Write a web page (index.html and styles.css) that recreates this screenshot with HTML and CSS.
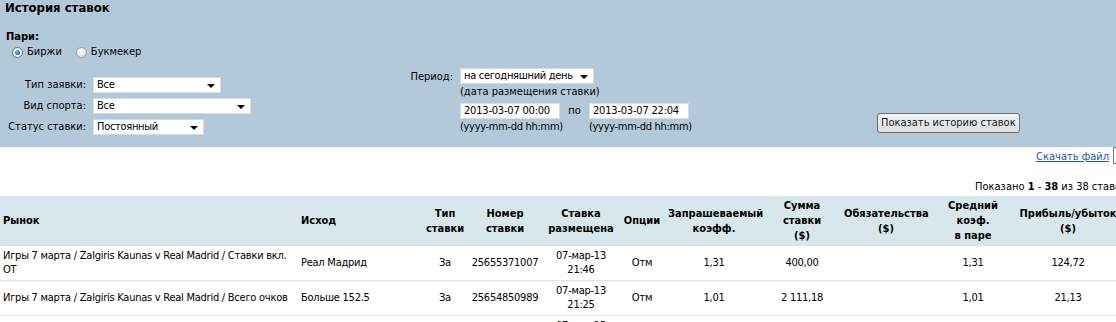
FILE: index.html
```html
<!DOCTYPE html>
<html lang="ru">
<head>
<meta charset="utf-8">
<title>История ставок</title>
<link rel="stylesheet" href="styles.css">
</head>
<body>
<div class="page">
  <div class="panel">
    <h1 class="title">История ставок</h1>
    <div class="pari">
      <div class="pari-label">Пари:</div>
      <div class="radios">
        <span class="radio"><span class="rb rb-on"><span class="dot"></span></span>Биржи</span>
        <span class="radio"><span class="rb"></span>Букмекер</span>
      </div>
    </div>
    <div class="filters">
      <div class="left">
        <span class="lbl">Тип заявки:</span>
        <span class="sel w128"><span class="val">Все</span><span class="arrow"></span></span>
        <span class="lbl">Вид спорта:</span>
        <span class="sel w158"><span class="val">Все</span><span class="arrow"></span></span>
        <span class="lbl">Статус ставки:</span>
        <span class="sel w111"><span class="val">Постоянный</span><span class="arrow"></span></span>
      </div>
      <div class="period">
        <span class="lbl plbl">Период:</span>
        <div class="pmain">
          <span class="sel w134"><span class="val">на сегодняшний день</span><span class="arrow"></span></span>
          <div class="note">(дата размещения ставки)</div>
          <div class="dates">
            <span class="inp">2013-03-07 00:00</span>
            <span class="po">по</span>
            <span class="inp">2013-03-07 22:04</span>
            <span class="hint">(yyyy-mm-dd hh:mm)</span>
            <span></span>
            <span class="hint">(yyyy-mm-dd hh:mm)</span>
          </div>
        </div>
      </div>
      <div class="btnwrap"><span class="btn">Показать историю ставок</span></div>
    </div>
  </div>
  <div class="tools">
    <a class="dl" href="#">Скачать файл</a>
    <span class="fmt"></span>
  </div>
  <div class="shown">Показано <b>1</b> - <b>38</b> из 38 ставок</div>
  <table class="bets">
    <colgroup>
      <col class="c1"><col class="c2"><col class="c3"><col class="c4"><col class="c5"><col class="c6"><col class="c7"><col class="c8"><col class="c9"><col class="c10"><col class="c11">
    </colgroup>
    <thead>
      <tr>
        <th class="l">Рынок</th>
        <th class="l">Исход</th>
        <th>Тип<br>ставки</th>
        <th>Номер<br>ставки</th>
        <th>Ставка<br>размещена</th>
        <th>Опции</th>
        <th>Запрашеваемый<br>коэфф.</th>
        <th>Сумма<br>ставки<br>($)</th>
        <th>Обязательства<br>($)</th>
        <th>Средний<br>коэф.<br>в паре</th>
        <th>Прибыль/убыток<br>($)</th>
      </tr>
    </thead>
    <tbody>
      <tr>
        <td class="l">Игры 7 марта / Zalgiris Kaunas v Real Madrid / Ставки вкл. ОТ</td>
        <td class="l">Реал Мадрид</td>
        <td>За</td>
        <td>25655371007</td>
        <td>07-мар-13<br>21:46</td>
        <td>Отм</td>
        <td>1,31</td>
        <td>400,00</td>
        <td></td>
        <td>1,31</td>
        <td>124,72</td>
      </tr>
      <tr>
        <td class="l">Игры 7 марта / Zalgiris Kaunas v Real Madrid / Всего очков</td>
        <td class="l">Больше 152.5</td>
        <td>За</td>
        <td>25654850989</td>
        <td>07-мар-13<br>21:25</td>
        <td>Отм</td>
        <td>1,01</td>
        <td>2 111,18</td>
        <td></td>
        <td>1,01</td>
        <td>21,13</td>
      </tr>
      <tr>
        <td class="l">Игры 7 марта / Zalgiris Kaunas v Real Madrid</td>
        <td class="l">Реал Мадрид</td>
        <td>За</td>
        <td>25654723461</td>
        <td>07-мар-13<br>21:19</td>
        <td>Отм</td>
        <td>1,20</td>
        <td>500,00</td>
        <td></td>
        <td>1,20</td>
        <td>100,00</td>
      </tr>
    </tbody>
  </table>
</div>
</body>
</html>
```

FILE: styles.css
```css
html, body {
  margin: 0;
  padding: 0;
  overflow: hidden;
  background: #ffffff;
}
body {
  font-family: "DejaVu Sans Condensed", "DejaVu Sans", sans-serif;
  font-stretch: condensed;
  font-size: 11px;
  line-height: 14px;
  color: #000000;
}
.page {
  width: 1127px;
}
.panel {
  background: #b3c9d9;
  height: 147px;
  box-sizing: border-box;
}
.title {
  margin: 0;
  padding: 0 0 0 5px;
  font-size: 13px;
  line-height: 16px;
  font-weight: bold;
}
.pari {
  margin-top: 14px;
  padding-left: 6px;
}
.pari-label {
  font-weight: bold;
}
.radios {
  display: flex;
  gap: 14px;
  margin-top: 1px;
  padding-left: 6px;
}
.radio {
  display: flex;
  align-items: center;
  gap: 4px;
}
.rb {
  width: 11px;
  height: 11px;
  box-sizing: border-box;
  border-radius: 50%;
  border: 1px solid #9aa3aa;
  background: radial-gradient(circle at 35% 35%, #ffffff 0%, #e4e4e4 60%, #cfcfcf 100%);
  display: flex;
  align-items: center;
  justify-content: center;
}
.rb-on {
  border-color: #5c7a92;
  background: radial-gradient(circle at 35% 35%, #ffffff 0%, #dfe6ec 100%);
}
.dot {
  width: 5px;
  height: 5px;
  border-radius: 50%;
  background: radial-gradient(circle at 40% 35%, #7cc3f2 0%, #1b6fb5 70%, #0f4e86 100%);
}
.filters {
  display: grid;
  grid-template-columns: 411px 466px auto;
  margin-top: 8px;
}
.left {
  display: grid;
  grid-template-columns: 86px auto;
  column-gap: 7px;
  row-gap: 5px;
  margin-top: 10px;
  align-items: center;
  justify-items: start;
  align-self: start;
}
.lbl {
  justify-self: end;
  text-align: right;
  white-space: nowrap;
}
.sel {
  display: flex;
  align-items: center;
  justify-content: space-between;
  height: 16px;
  box-sizing: border-box;
  background: #ffffff;
  border: 1px solid #d3dde4;
  padding: 0 5px 0 3px;
  white-space: nowrap;
}
.sel .val {
  letter-spacing: -0.3px;
}
.w128 { width: 128px; }
.w158 { width: 158px; }
.w111 { width: 111px; }
.w134 { width: 134px; }
.arrow {
  flex: none;
  width: 0;
  height: 0;
  border-left: 4px solid transparent;
  border-right: 4px solid transparent;
  border-top: 4px solid #000000;
  margin-top: 1px;
}
.period {
  display: grid;
  grid-template-columns: 42px auto;
  column-gap: 7px;
  align-self: start;
  margin-top: 1px;
}
.plbl {
  line-height: 16px;
  margin-top: 1px;
}
.pmain {
  display: flex;
  flex-direction: column;
  align-items: flex-start;
}
.note {
  margin-top: 1px;
  white-space: nowrap;
}
.dates {
  display: grid;
  grid-template-columns: 100px 29px 100px;
  margin-top: 4px;
  row-gap: 1px;
  align-items: center;
}
.inp {
  height: 16px;
  box-sizing: border-box;
  background: #ffffff;
  border: 1px solid #d3dde4;
  padding: 0 3px;
  line-height: 14px;
  white-space: nowrap;
  letter-spacing: -0.2px;
}
.po {
  text-align: center;
}
.hint {
  white-space: nowrap;
  letter-spacing: -0.3px;
}
.btnwrap {
  align-self: start;
  margin-top: 46px;
}
.btn {
  display: inline-block;
  height: 20px;
  box-sizing: border-box;
  line-height: 18px;
  padding: 0 3px;
  border: 1px solid #707070;
  border-radius: 3px;
  background: linear-gradient(#f4f4f4, #dedede);
  color: #101828;
  white-space: nowrap;
}
.tools {
  display: flex;
  justify-content: flex-end;
  align-items: flex-start;
  gap: 4px;
  height: 17px;
}
.dl {
  margin-top: 3px;
  color: #1b56a6;
  text-decoration: underline;
}
.fmt {
  width: 14px;
  height: 17px;
  box-sizing: border-box;
  border: 1px solid #7a7a7a;
  border-right: none;
  background: #ffffff;
}
.shown {
  margin-top: 16px;
  text-align: right;
}
.bets {
  margin-top: 2px;
  width: 1121px;
  table-layout: fixed;
  border-collapse: collapse;
}
.c1 { width: 298px; }
.c2 { width: 125px; }
.c3 { width: 44px; }
.c4 { width: 76px; }
.c5 { width: 76px; }
.c6 { width: 46px; }
.c7 { width: 98px; }
.c8 { width: 78px; }
.c9 { width: 90px; }
.c10 { width: 84px; }
.c11 { width: 106px; }
.bets th {
  background: #d8e7eb;
  font-weight: bold;
  line-height: 15px;
  padding: 2px 3px 3px;
  text-align: center;
  vertical-align: middle;
  white-space: nowrap;
}
.bets td {
  padding: 3px;
  text-align: center;
  vertical-align: middle;
  border-bottom: 1px solid #e2e2e2;
  letter-spacing: -0.25px;
}
.bets .l {
  text-align: left;
}
```
